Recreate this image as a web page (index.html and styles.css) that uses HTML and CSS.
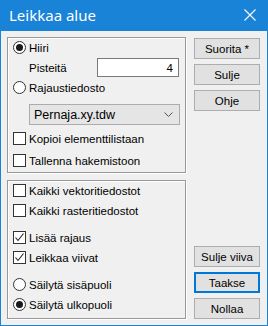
FILE: index.html
```html
<!DOCTYPE html>
<html lang="fi">
<head>
    <meta charset="UTF-8">
    <title>Leikkaa alue</title>
    <link rel="stylesheet" href="styles.css">
</head>
<body>
    <div class="window">
        <div class="titlebar">
            <span class="title">Leikkaa alue</span>
            <svg class="close" width="12" height="12" viewBox="0 0 12 12">
                <path d="M0.5 0.5 L11.5 11.5 M11.5 0.5 L0.5 11.5" stroke="#fff" stroke-width="1.1" fill="none"/>
            </svg>
        </div>
        <div class="content">
            <div class="left">
                <div class="group group-top">
                    <div class="row row-hiiri"><span class="radio checked"></span>Hiiri</div>
                    <div class="row row-input">
                        <span class="label">Pisteitä</span>
                        <div class="textbox">4</div>
                    </div>
                    <div class="row"><span class="radio"></span>Rajaustiedosto</div>
                    <div class="combo">
                        <span>Pernaja.xy.tdw</span>
                        <svg width="9" height="6" viewBox="0 0 9 6"><path d="M0.5 0.5 L4.5 4.5 L8.5 0.5" stroke="#555" fill="none"/></svg>
                    </div>
                    <div class="row row-kopioi"><span class="check"></span>Kopioi elementtilistaan</div>
                    <div class="row row-tallenna"><span class="check"></span>Tallenna hakemistoon</div>
                </div>
                <div class="group group-bottom">
                    <div class="row"><span class="check"></span>Kaikki vektoritiedostot</div>
                    <div class="row row-tight"><span class="check"></span>Kaikki rasteritiedostot</div>
                    <div class="row row-gap">
                        <span class="check"><svg width="11" height="11" viewBox="0 0 11 11"><path d="M1.5 5.5 L4 8.5 L9.5 1.5" stroke="#222" stroke-width="1.1" fill="none"/></svg></span>Lisää rajaus
                    </div>
                    <div class="row row-tight">
                        <span class="check"><svg width="11" height="11" viewBox="0 0 11 11"><path d="M1.5 5.5 L4 8.5 L9.5 1.5" stroke="#222" stroke-width="1.1" fill="none"/></svg></span>Leikkaa viivat
                    </div>
                    <div class="row row-gap"><span class="radio"></span>Säilytä sisäpuoli</div>
                    <div class="row row-tight"><span class="radio checked"></span>Säilytä ulkopuoli</div>
                </div>
            </div>
            <div class="right">
                <div class="buttons">
                    <button>Suorita *</button>
                    <button>Sulje</button>
                    <button>Ohje</button>
                </div>
                <div class="buttons">
                    <button>Sulje viiva</button>
                    <button class="default">Taakse</button>
                    <button>Nollaa</button>
                </div>
            </div>
        </div>
    </div>
</body>
</html>
```

FILE: styles.css
```css
body {
    margin: 0;
    font-family: "Liberation Sans", Arial, sans-serif;
    font-size: 11.5px;
    color: #000;
}
.window {
    width: 268px;
    height: 326px;
    box-sizing: border-box;
    border: 1px solid #1883d7;
    border-top: none;
    background: #f0f0f0;
    display: flex;
    flex-direction: column;
}
.titlebar {
    height: 31px;
    margin: 0 -1px;
    background: #1883d7;
    display: flex;
    align-items: center;
    justify-content: space-between;
    padding: 0 12px 0 9px;
    color: #fff;
}
.title {
    font-family: "Noto Sans", sans-serif;
    font-size: 15px;
    margin-top: -1px;
}
.close {
    margin-top: -1px;
}
.content {
    display: flex;
    padding: 6px 0 0 6px;
    gap: 8px;
}
.left {
    width: 179px;
    display: flex;
    flex-direction: column;
    gap: 7px;
}
.group {
    border: 1px solid #999;
    box-shadow: inset 1px 1px 0 #fff, 1px 1px 0 #fff;
    padding: 0 0 0 5px;
}
.group-top {
    height: 134px;
}
.group-bottom {
    height: 137px;
}
.row {
    height: 19px;
    display: flex;
    align-items: center;
}
.row-input {
    height: 21px;
    padding-left: 16px;
}
.row-kopioi {
    margin-top: 4px;
}
.row-tallenna {
    margin-top: 3px;
}
.row-tight {
    margin-top: 1px;
}
.row-gap {
    margin-top: 8px;
}
.label {
    width: 68px;
}
.textbox {
    width: 82px;
    height: 19px;
    box-sizing: border-box;
    border: 1px solid #7a7a7a;
    background: #fff;
    text-align: right;
    padding: 3px 5px 0 0;
}
.combo {
    margin: 7px 5px 0 16px;
    height: 21px;
    box-sizing: border-box;
    border: 1px solid #acacac;
    background: #e5e5e5;
    display: flex;
    align-items: center;
    justify-content: space-between;
    padding: 0 6px 0 4px;
    font-size: 12.5px;
}
.radio, .check {
    width: 13px;
    height: 13px;
    box-sizing: border-box;
    border: 1px solid #333;
    background: #fff;
    margin-right: 3px;
    display: flex;
    align-items: center;
    justify-content: center;
}
.radio {
    border-radius: 50%;
}
.radio.checked::after {
    content: "";
    width: 7px;
    height: 7px;
    border-radius: 50%;
    background: #1a1a1a;
}
.right {
    width: 66px;
    display: flex;
    flex-direction: column;
    justify-content: space-between;
    height: 281px;
    padding-top: 1px;
}
.buttons {
    display: flex;
    flex-direction: column;
    gap: 5px;
}
button {
    height: 21px;
    border: 1px solid #adadad;
    background: #e1e1e1;
    font-family: "Liberation Sans", Arial, sans-serif;
    font-size: 11.5px;
    color: #000;
    padding: 0;
}
button.default {
    border: 2px solid #0078d7;
}
```
